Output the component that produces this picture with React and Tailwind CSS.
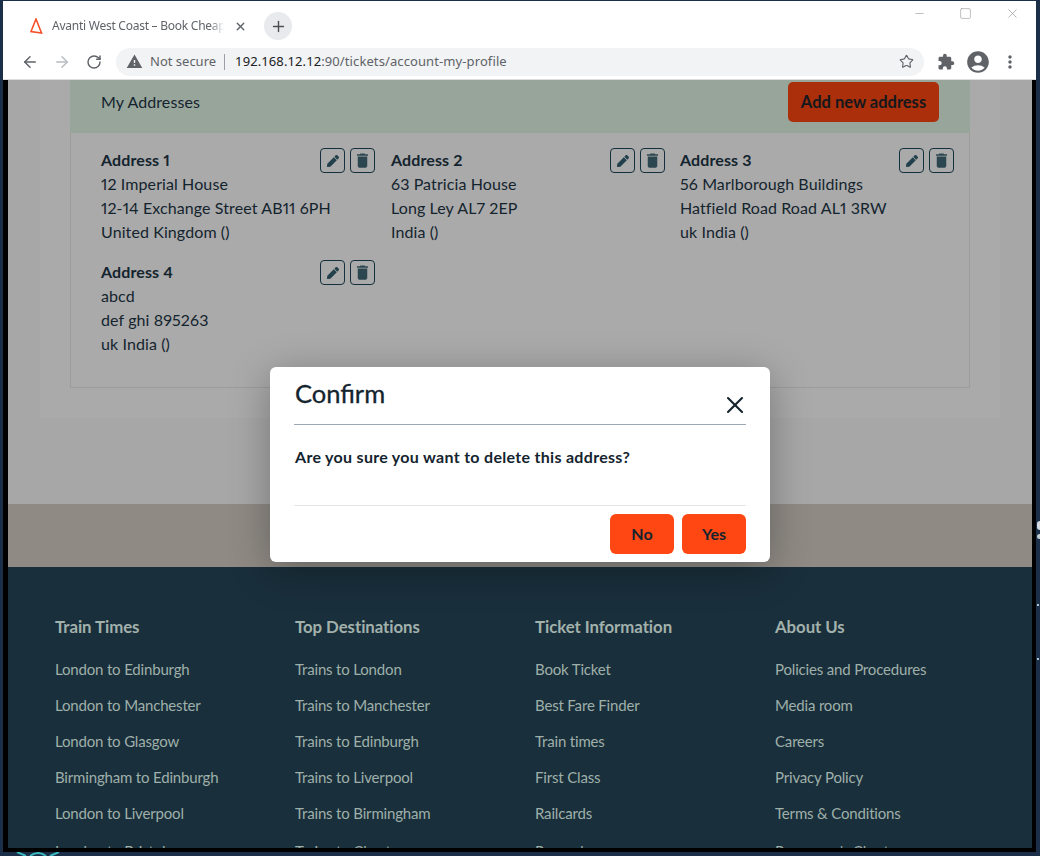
import { ArrowLeft, ArrowRight, RotateCw, Star, X, Plus, Minus, Square } from "lucide-react";
import { FaPen } from "react-icons/fa";
import { MdExtension, MdAccountCircle, MdMoreVert, MdWarning, MdDelete } from "react-icons/md";

const addresses = [
  ["Address 1", "12 Imperial House", "12-14 Exchange Street AB11 6PH", "United Kingdom ()"],
  ["Address 2", "63 Patricia House", "Long Ley AL7 2EP", "India ()"],
  ["Address 3", "56 Marlborough Buildings", "Hatfield Road Road AL1 3RW", "uk India ()"],
  ["Address 4", "abcd", "def ghi 895263", "uk India ()"],
];

const footerColumns = [
  ["Train Times", "London to Edinburgh", "London to Manchester", "London to Glasgow", "Birmingham to Edinburgh", "London to Liverpool", "London to Bristol"],
  ["Top Destinations", "Trains to London", "Trains to Manchester", "Trains to Edinburgh", "Trains to Liverpool", "Trains to Birmingham", "Trains to Chester"],
  ["Ticket Information", "Book Ticket", "Best Fare Finder", "Train times", "First Class", "Railcards", "Rewards"],
  ["About Us", "Policies and Procedures", "Media room", "Careers", "Privacy Policy", "Terms & Conditions", "Passenger's Charter"],
];

function AddressCard({ lines }) {
  return (
    <div className="flex h-[112px] w-[290px]">
      <div className="w-[219px] min-w-0 text-[16px] leading-[24px] tracking-[0.1px] text-[#14242e] [font-variant-numeric:proportional-nums]">
        <div className="font-bold">{lines[0]}</div>
        {lines.slice(1).map((l) => (
          <div key={l} className="whitespace-nowrap">{l}</div>
        ))}
      </div>
      <div className="flex h-[25px] gap-[5px]">
        <button className="flex h-[25px] w-[25px] items-center justify-center rounded-[4px] border border-[#14303c] text-[#22404c]">
          <FaPen size={12} />
        </button>
        <button className="flex h-[25px] w-[25px] items-center justify-center rounded-[4px] border border-[#14303c] text-[#2c4650]">
          <MdDelete size={19} />
        </button>
      </div>
    </div>
  );
}

function Browser() {
  return (
    <>
      <div className="flex h-[43px] items-start justify-between bg-white pl-[25px]">
        <div className="mt-[11px] flex h-[28px] items-center">
          <svg width="14" height="16" viewBox="0 0 14 16" fill="none" className="ml-[1px]">
            <path d="M7 1 L2 13.5 L12.5 15 Z" stroke="#f4502a" strokeWidth="1.6" />
          </svg>
          <div className="ml-[9px] w-[172px] overflow-hidden whitespace-nowrap font-['Noto_Sans',sans-serif] text-[12px] tracking-[-0.25px] text-[#5f6368] [mask-image:linear-gradient(to_right,black_92%,transparent)]">
            Avanti West Coast – Book Cheap Train Tickets
          </div>
          <X size={13} strokeWidth={2.5} className="ml-[10px] text-[#5f6368]" />
          <div className="ml-[17px] flex h-[28px] w-[28px] items-center justify-center rounded-full bg-[#e8eaed]">
            <Plus size={17} strokeWidth={2} className="text-[#4b4f54]" />
          </div>
        </div>
        <div className="flex h-[24px] items-center gap-[33px] pr-[16px] text-[#8a8a8a]">
          <Minus size={13} strokeWidth={1} />
          <Square size={13} strokeWidth={1} />
          <X size={15} strokeWidth={1} />
        </div>
      </div>
      <div className="flex h-[36px] items-center border-b border-[#dedede] bg-white">
        <ArrowLeft size={18} strokeWidth={2} className="ml-[18px] text-[#5f6368]" />
        <ArrowRight size={18} strokeWidth={2} className="ml-[14px] text-[#b9bcc0]" />
        <RotateCw size={16} strokeWidth={2.2} className="ml-[15px] text-[#5f6368]" />
        <div className="ml-[14px] flex h-[28px] w-[808px] items-center rounded-full bg-[#f1f3f4] pl-[10px] pr-[10px] font-['Noto_Sans',sans-serif] text-[13px]">
          <MdWarning size={17} className="text-[#5f6368]" />
          <span className="ml-[7px] text-[#5f6368]">Not secure</span>
          <span className="ml-[8px] h-[16px] w-px bg-[#9aa0a6]" />
          <span className="ml-[10px] tracking-[0.1px] text-[#202124]">192.168.12.12</span>
          <span className="tracking-[0.1px] text-[#5f6368]">:90/tickets/account-my-profile</span>
          <Star size={15} strokeWidth={1.8} className="ml-auto text-[#5f6368]" />
        </div>
        <MdExtension size={18} className="ml-[13px] text-[#5f6368]" />
        <MdAccountCircle size={26} className="ml-[10px] text-[#5f6368]" />
        <MdMoreVert size={20} className="ml-[9px] text-[#5f6368]" />
      </div>
    </>
  );
}

function Footer() {
  return (
    <div className="h-[281px] overflow-hidden bg-[#192f3b] pl-[47px] pt-[50px]">
      <div className="flex">
        {footerColumns.map((col) => (
          <div key={col[0]} className="w-[240px]">
            <div className="mb-[14px] h-[20px] text-[16.8px] font-bold leading-[20px] tracking-[-0.05px] text-[#a2b1ac]">{col[0]}</div>
            {col.slice(1).map((l, i) => (
              <div key={l} className={`h-[36px] text-[15px] leading-[36px] tracking-[-0.17px] text-[#9fafaa] ${i === 5 ? "pt-[2px]" : ""}`}>{l}</div>
            ))}
          </div>
        ))}
      </div>
    </div>
  );
}

export default function App() {
  return (
    <div className="relative h-[856px] w-[1040px] overflow-hidden bg-[#1b2f48] pb-[4px] pl-[3px] pr-[4px] pt-px font-['Lato',sans-serif]">
      <div className="flex h-full flex-col bg-black pb-[4px]">
        <Browser />
        <div className="ml-[5px] mr-[4px] flex flex-1 flex-col overflow-hidden bg-[#a7a7a7]">
          <div className="h-[424px] px-[32px]">
            <div className="h-[338px] bg-[#aaaaaa] px-[30px]">
              <div className="flex h-[53px] items-start justify-between bg-[#98a59b] px-[31px]">
                <span className="pt-[10px] text-[16px] leading-[24px] tracking-[0.1px] text-[#14242e]">My Addresses</span>
                <button className="mt-[2px] h-[40px] w-[151px] rounded-[5px] bg-[#ab2f0b] text-[16.5px] font-bold text-[#14181c]">
                  Add new address
                </button>
              </div>
              <div className="grid h-[255px] grid-cols-[290px_289px_290px] content-start border-x border-b border-[#9c9c9c] pl-[30px] pt-[15px]">
                {addresses.map((a) => (
                  <AddressCard key={a[0]} lines={a} />
                ))}
              </div>
            </div>
          </div>
          <div className="h-[63px] bg-[#8f8a84]" />
          <Footer />
        </div>
      </div>

      {/* bits of the desktop showing behind the window */}
      <svg width="44" height="4" viewBox="0 0 44 4" className="absolute bottom-0 left-[16px]" fill="none" stroke="#3bb8bd" strokeWidth="2">
        <path d="M1 0 L10 4 M14 4 Q22 -2 30 4 M34 4 L43 0" />
      </svg>
      <div className="absolute right-0 top-[521px] h-[9px] w-[3px] rounded-l-full bg-[#d5dbe0]" />
      <div className="absolute right-0 top-[534px] h-[5px] w-[3px] rounded-l-full bg-[#c3cbd2]" />
      <div className="absolute right-[1px] top-[604px] h-[2px] w-[2px] bg-[#b8c2cc]" />
      <div className="absolute right-[1px] top-[658px] h-[2px] w-[2px] bg-[#b8c2cc]" />

      {/* modal sits over the page */}
      <div className="absolute left-[270px] top-[367px] h-[195px] w-[500px] rounded-[6px] bg-white px-[24px] text-[#14242e] shadow-[0_8px_40px_rgba(0,0,0,0.3)]">
        <div className="relative h-[58px] border-b border-[#9aa9b5]">
          <span className="absolute left-[1px] top-[8px] text-[25.5px] leading-[36px] [-webkit-text-stroke:0.3px_#14242e]">Confirm</span>
          <X size={28} strokeWidth={1.8} className="absolute right-[-3px] top-[24px]" />
        </div>
        <div className="h-[81px] border-b border-[#e5e5e5] pl-[1px] pt-[20px] text-[16px] font-bold leading-[24px] tracking-[0.3px]">
          Are you sure you want to delete this address?
        </div>
        <div className="flex justify-end gap-[8px] pt-[8px]">
          <button className="h-[40px] w-[64px] rounded-[6px] bg-[#ff4713] text-[16px] font-bold">No</button>
          <button className="h-[40px] w-[64px] rounded-[6px] bg-[#ff4713] text-[16px] font-bold">Yes</button>
        </div>
      </div>
    </div>
  );
}
